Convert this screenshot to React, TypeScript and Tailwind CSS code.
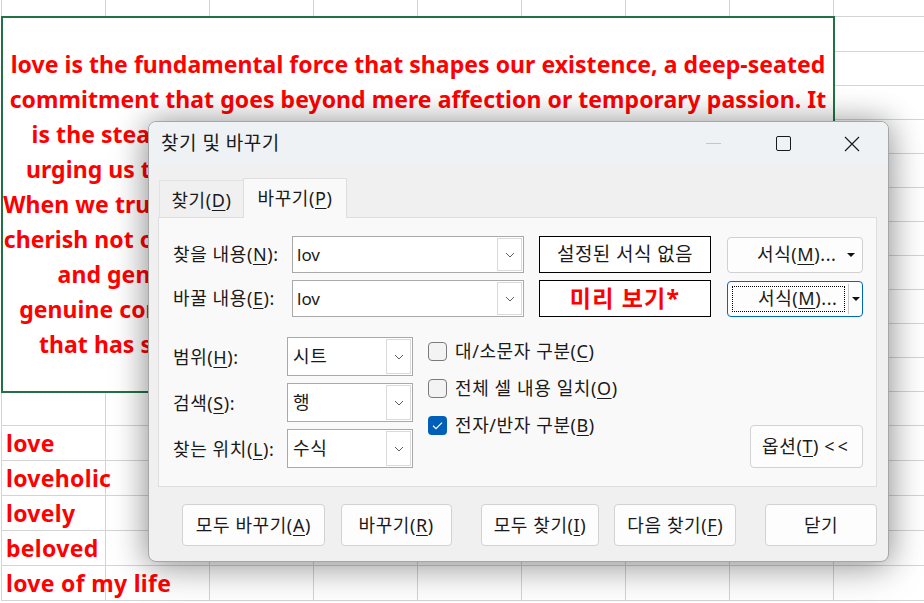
import React from "react";

const KF = "font-[family-name:'Noto_Sans','Noto_Sans_CJK_KR',sans-serif]";
const SF = "font-[family-name:'Noto_Sans','Noto_Sans_CJK_KR',sans-serif]";

const lines = [
  "love is the fundamental force that shapes our existence, a deep-seated",
  "commitment that goes beyond mere affection or temporary passion. It",
  "is the steady flame that warms our hearts even in the coldest time,",
  "urging us to become the best versions of ourselves every single day.",
  "When we truly love someone, we learn to embrace all of their flaws, and",
  "cherish not only their strengths but also all of their quiet imperfections,",
  "and generosity flows freely from within without any condition,",
  "genuine connection rooted in trust, patience and respect, a real bond",
  "that has sustained humanity and its dreams throughout the ages.",
];

const words = ["", "love", "loveholic", "lovely", "beloved", "love of my life"];

function GridCells() {
  return (
    <>
      {Array.from({ length: 8 }).map((_, i) => (
        <div key={i} className="w-[104px] shrink-0 h-full border-r border-[#d4d4d4]" />
      ))}
    </>
  );
}

function Chevron() {
  return (
    <svg width="10" height="6" viewBox="0 0 10 6">
      <path d="M1 1 L5 5 L9 1" fill="none" stroke="#5f5f5f" strokeWidth="1" />
    </svg>
  );
}

function Tri() {
  return (
    <svg width="8" height="4" viewBox="0 0 8 4">
      <polygon points="0,0 8,0 4,4" fill="#111" />
    </svg>
  );
}

function U({ c }: { c: string }) {
  return <span className="underline underline-offset-[3px] decoration-1">{c}</span>;
}

function Combo({ text, cls }: { text: string; cls: string }) {
  return (
    <div className={`flex items-stretch bg-white border border-[#a9a9a9] ${cls}`}>
      <div className="flex-1 flex items-center pl-[4px] text-[17px] tracking-normal text-[#1a1a1a]">{text}</div>
      <div className="m-[1px] w-[25px] flex items-center justify-center border border-[#dadada] bg-white">
        <Chevron />
      </div>
    </div>
  );
}

function Check({ checked }: { checked?: boolean }) {
  if (checked)
    return (
      <div className="w-[19px] h-[19px] shrink-0 rounded-[4px] bg-[#005fb8] flex items-center justify-center">
        <svg width="19" height="19" viewBox="0 0 19 19">
          <path d="M5 9.8 L8 12.6 L14 6.6" fill="none" stroke="#fff" strokeWidth="1.2" />
        </svg>
      </div>
    );
  return <div className="w-[19px] h-[19px] shrink-0 rounded-[4px] border border-[#7a7a7a] bg-[#f3f3f3]" />;
}

function Btn({ children, cls }: { children: React.ReactNode; cls: string }) {
  return (
    <div
      className={`h-[42px] flex items-center justify-center rounded-[4px] border border-[#d2d2d2] bg-[#fdfdfd] text-[#1a1a1a] whitespace-nowrap ${cls}`}
    >
      {children}
    </div>
  );
}

export default function App() {
  return (
    <div className="relative w-[924px] h-[603px] overflow-hidden bg-white">
      <div className="flex">
        <div className="w-[835px] shrink-0 flex flex-col">
          <div className="h-[16px] ml-[1px] flex border-l border-[#d4d4d4]">
            <GridCells />
          </div>
          <div
            className={`h-[377px] w-[834px] ml-[1px] border-2 border-[#217346] flex flex-col items-center justify-center text-[23px] tracking-[0.05px] font-bold leading-[35px] text-[#ff0000] ${SF}`}
          >
            {lines.map((l, i) => (
              <div key={i} className="whitespace-nowrap">
                {l}
              </div>
            ))}
          </div>
          {words.map((w, i) => (
            <div
              key={i}
              className={`${i === 0 ? "h-[33px]" : "h-[35px]"} ml-[1px] relative flex border-l border-b border-[#d4d4d4]`}
            >
              <GridCells />
              <div
                className={`absolute left-[4px] top-0 h-full flex items-center whitespace-nowrap text-[23px] tracking-[0.3px] font-bold text-[#ff0000] ${SF}`}
              >
                {w}
              </div>
            </div>
          ))}
        </div>
        <div className="flex-1 flex flex-col">
          <div className="h-[17px] border-b border-[#d4d4d4]" />
          <div className="h-[35px] border-b border-[#d4d4d4]" />
          {Array.from({ length: 11 }).map((_, i) => (
            <div key={i} className="h-[34px] border-b border-[#d4d4d4]" />
          ))}
          {Array.from({ length: 6 }).map((_, i) => (
            <div key={i} className="h-[35px] border-b border-[#d4d4d4]" />
          ))}
        </div>
      </div>

      {/* Dialog window */}
      <div
        className={`absolute left-[148px] top-[121px] w-[741px] h-[441px] rounded-[8px] border border-[#a6a6a6] bg-[#f0f0f0] overflow-hidden shadow-[0_0_30px_rgba(0,0,0,0.3),0_8px_40px_rgba(0,0,0,0.22)] flex flex-col ${KF} text-[18px] tracking-[0.6px] text-[#1a1a1a]`}
      >
        <div className="h-[43px] shrink-0 bg-[#eef2f5] flex items-center">
          <div className="pl-[12px] text-[19px] tracking-[0.5px] leading-none flex-1">찾기 및 바꾸기</div>
          <div className="w-[70px] h-full flex items-center justify-center">
            <div className="w-[15px] h-px bg-[#c6c6c6]" />
          </div>
          <div className="w-[70px] h-full flex items-center justify-center">
            <div className="w-[15px] h-[15px] border-[1.3px] border-[#1a1a1a] rounded-[2px]" />
          </div>
          <div className="w-[70px] h-full flex items-center justify-center pr-[2px]">
            <svg width="16" height="16" viewBox="0 0 16 16">
              <path d="M1 1 L15 15 M15 1 L1 15" stroke="#1a1a1a" strokeWidth="1.2" />
            </svg>
          </div>
        </div>

        <div className="flex-1 pt-[13px] pl-[9px] pr-[11px] flex flex-col">
          <div className="h-[39px] flex items-end pl-[1px]">
            <div className="w-[84px] h-[37px] flex items-center justify-center border-l border-t border-[#e2e2e2] bg-[#f0f0f0] pt-[2px]">
              찾기(<U c="D" />)
            </div>
            <div className="w-[104px] h-[40px] -mb-px relative z-10 flex items-center justify-center border-x border-t border-[#dedede] bg-[#f9f9f9]">
              바꾸기(<U c="P" />)
            </div>
          </div>

          <div className="h-[270px] border border-[#dedede] bg-[#f9f9f9] pl-[14px] pr-[13px] pt-[18px] flex flex-col">
            <div className="flex items-center h-[37px]">
              <div className="w-[119px] shrink-0 whitespace-nowrap">
                찾을 내용(<U c="N" />):
              </div>
              <Combo text="lov" cls="w-[232px] h-[37px] shrink-0" />
              <div className="ml-[15px] w-[172px] h-[37px] shrink-0 border border-black bg-white flex items-center justify-center text-[19px] tracking-[0.4px] whitespace-nowrap">
                설정된 서식 없음
              </div>
              <div className="ml-[16px] w-[136px] h-[36px] shrink-0 rounded-[4px] border border-[#d0d0d0] bg-[#fdfdfd] flex items-center">
                <div className="flex-1 pl-[29px] whitespace-nowrap">
                  서식(<U c="M" />)...
                </div>
                <div className="w-[22px] flex justify-center">
                  <Tri />
                </div>
              </div>
            </div>
            <div className="flex items-center h-[37px] mt-[7px]">
              <div className="w-[119px] shrink-0 whitespace-nowrap">
                바꿀 내용(<U c="E" />):
              </div>
              <Combo text="lov" cls="w-[232px] h-[37px] shrink-0" />
              <div className="ml-[15px] w-[172px] h-[37px] shrink-0 border border-black bg-white flex items-center justify-center text-[23px] font-bold text-[#ff0000] tracking-[1.2px] whitespace-nowrap">
                미리 보기*
              </div>
              <div className="ml-[16px] w-[136px] h-[36px] shrink-0 rounded-[4px] border border-[#0067c0] bg-[#fdfdfd] flex items-center pl-[4px]">
                <div className="w-[113px] h-[26px] shrink-0 border border-dotted border-black flex items-center pl-[25px] whitespace-nowrap">
                  서식(<U c="M" />)...
                </div>
                <div className="ml-[3px] w-px h-[30px] bg-[#c8c8c8]" />
                <div className="flex-1 flex justify-center">
                  <Tri />
                </div>
              </div>
            </div>

            <div className="flex mt-[20px]">
              <div className="flex flex-col gap-[7px]">
                {[
                  ["범위", "H", "시트"],
                  ["검색", "S", "행"],
                  ["찾는 위치", "L", "수식"],
                ].map(([a, k, v]) => (
                  <div key={k} className="flex items-center h-[39px]">
                    <div className="w-[114px] shrink-0 whitespace-nowrap pt-[2px]">
                      {a}(<U c={k} />):
                    </div>
                    <div className="w-[126px] h-[39px] flex items-stretch bg-white border border-[#a9a9a9]">
                      <div className="flex-1 flex items-center pl-[5px]">{v}</div>
                      <div className="m-[1px] w-[25px] flex items-center justify-center border border-[#dadada] bg-white">
                        <Chevron />
                      </div>
                    </div>
                  </div>
                ))}
              </div>
              <div className="ml-[15px] pt-[5px] flex flex-col gap-[18px]">
                <div className="flex items-center h-[19px] gap-[8px] whitespace-nowrap">
                  <Check />
                  <span>
                    대/소문자 구분(<U c="C" />)
                  </span>
                </div>
                <div className="flex items-center h-[19px] gap-[8px] whitespace-nowrap">
                  <Check />
                  <span>
                    전체 셀 내용 일치(<U c="O" />)
                  </span>
                </div>
                <div className="flex items-center h-[19px] gap-[8px] whitespace-nowrap">
                  <Check checked />
                  <span>
                    전자/반자 구분(<U c="B" />)
                  </span>
                </div>
              </div>
              <div className="ml-auto self-end w-[113px] h-[43px] rounded-[4px] border border-[#d2d2d2] bg-[#fdfdfd] flex items-center justify-center whitespace-nowrap">
                옵션(<U c="T" />)&nbsp;<span className="tracking-[3px]">&lt;&lt;</span>
              </div>
            </div>
          </div>

          <div className="flex mt-[17px] pl-[24px]">
            <Btn cls="w-[143px]">
              모두 바꾸기(<U c="A" />)
            </Btn>
            <Btn cls="w-[111px] ml-[16px]">
              바꾸기(<U c="R" />)
            </Btn>
            <Btn cls="w-[119px] ml-[29px]">
              모두 찾기(<U c="I" />)
            </Btn>
            <Btn cls="w-[122px] ml-[15px]">
              다음 찾기(<U c="F" />)
            </Btn>
            <Btn cls="w-[112px] ml-[29px]">닫기</Btn>
          </div>
        </div>
      </div>
    </div>
  );
}
